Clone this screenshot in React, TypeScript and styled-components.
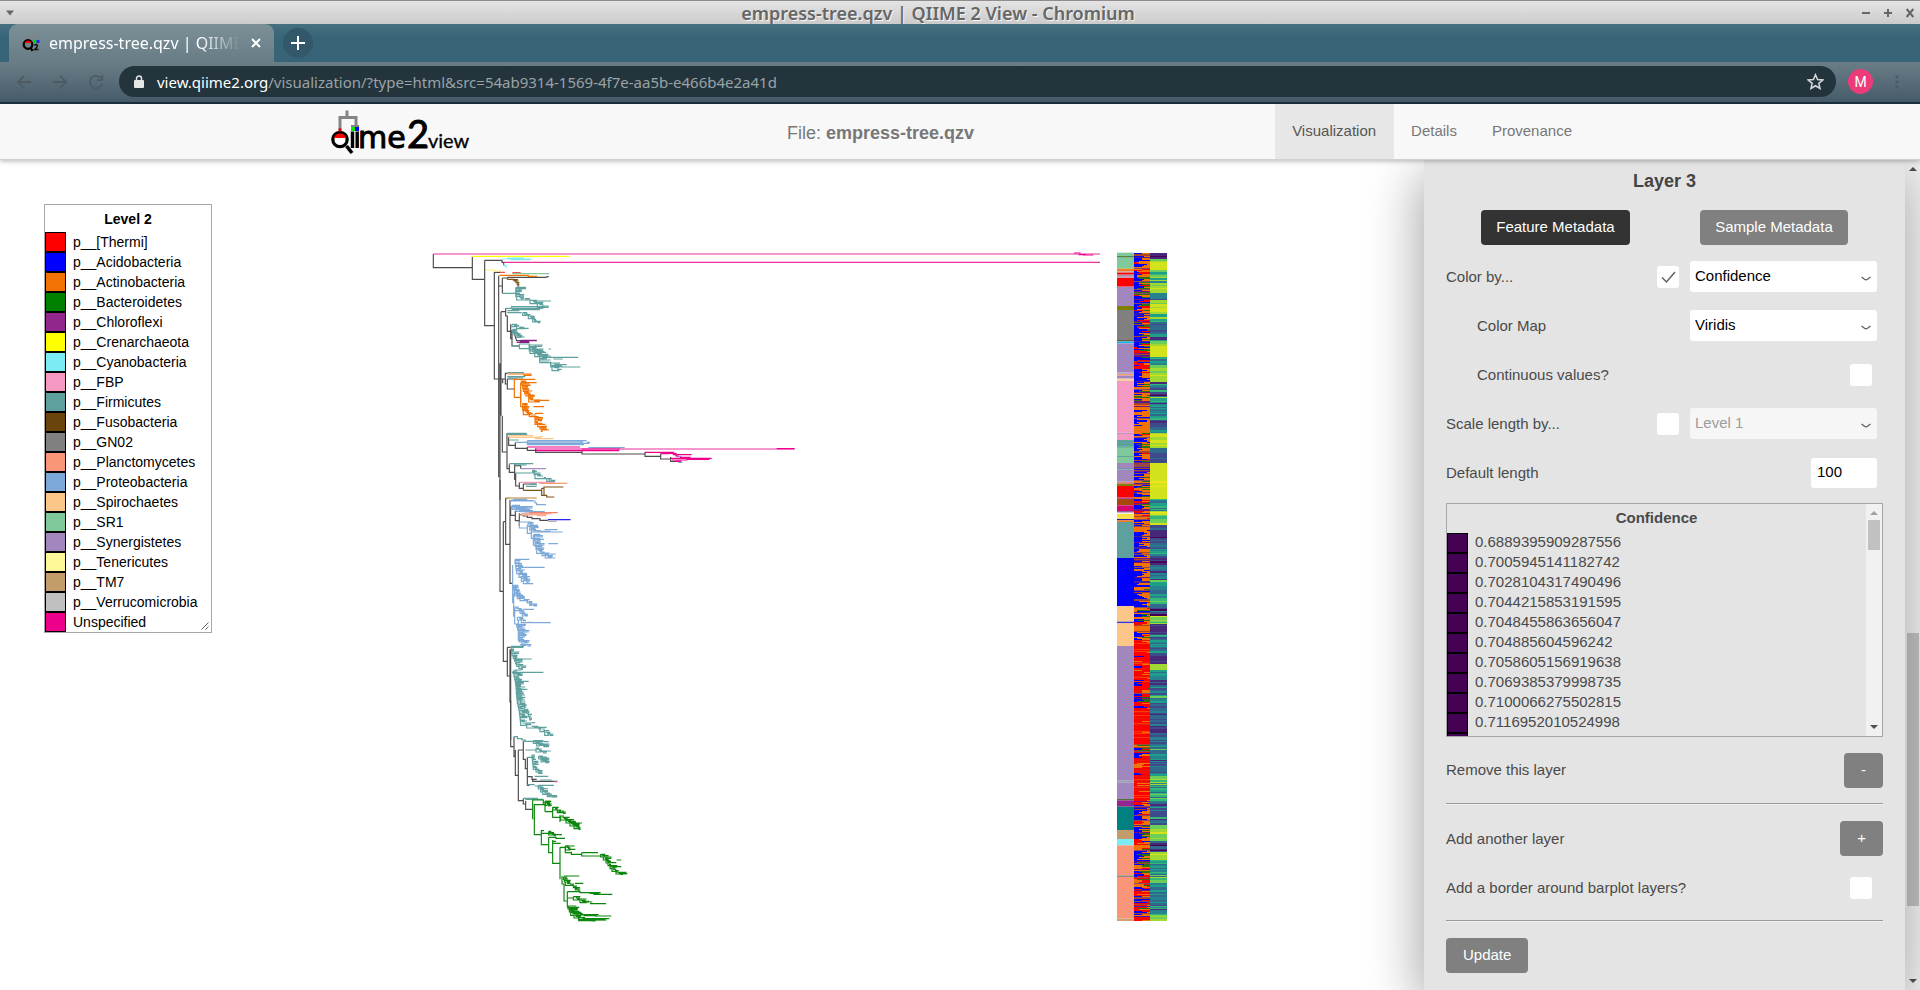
import React from "react";
import styled, { createGlobalStyle } from "styled-components";

const GlobalStyle = createGlobalStyle`
  *, *::before, *::after { box-sizing: border-box; }
  body { margin: 0; background: #fff; font-family: "Liberation Sans", Arial, sans-serif; }
  button, input, select { font: inherit; }
`;

const CHROME_FONT = `"Noto Sans", "Open Sans", sans-serif`;

/* ---------- window chrome ---------- */

const Page = styled.div`
  display: flex;
  flex-direction: column;
  height: 100vh;
  overflow: hidden;
`;

const TitleBar = styled.header`
  display: grid;
  grid-template-columns: auto 1fr auto;
  align-items: center;
  flex: none;
  height: 24px;
  padding: 0 4px;
  border-top: 1px solid #8f8d8f;
  background: linear-gradient(#e4e4e4, #cbcbcb);
  color: #666;
  font-family: ${CHROME_FONT};
`;

const WindowTitle = styled.h1`
  margin: 0;
  text-align: center;
  font-size: 18px;
  line-height: 22px;
  font-weight: 600;
  color: #666;
  text-shadow: 1px 1px 0 #f4f4f4;
`;

const WindowButtons = styled.div`
  display: flex;
  gap: 10px;
`;

const PlainButton = styled.button`
  display: flex;
  align-items: center;
  justify-content: center;
  padding: 0;
  border: 0;
  background: none;
  color: inherit;
`;

const TabStrip = styled.div`
  display: flex;
  flex: none;
  height: 38px;
  padding-left: 9px;
  background: linear-gradient(#44707f, #386478 14px, #386478);
`;

const BrowserTab = styled.div`
  display: flex;
  align-items: center;
  width: 265px;
  padding: 0 12px 0 13px;
  border-radius: 9px 9px 0 0;
  background: linear-gradient(#7b9096, #687c86);
  color: #fff;
  font-family: ${CHROME_FONT};
`;

const TabTitle = styled.span`
  flex: 1;
  margin-left: 9px;
  overflow: hidden;
  white-space: nowrap;
  font-size: 16px;
  line-height: 24px;
  mask-image: linear-gradient(90deg, #000 150px, transparent 192px);
`;

const NewTab = styled(PlainButton)`
  width: 30px;
  height: 30px;
  margin: 4px 0 0 9px;
  border-radius: 50%;
  background: #33586a;
  color: #fff;
`;

const Toolbar = styled.div`
  display: flex;
  align-items: center;
  flex: none;
  height: 42px;
  padding: 0 21px 1px 16px;
  border-bottom: 2px solid #1b3342;
  background: linear-gradient(#6a7e88, #465b69);
  color: #4f5b63;
`;

const NavButtons = styled.div`
  display: flex;
  gap: 20px;
  width: 103px;
`;

const AddressBar = styled.div`
  display: flex;
  align-items: center;
  flex: 1;
  height: 31px;
  padding: 0 12px 0 14px;
  border-radius: 16px;
  background: #24343c;
  color: #d4d8da;
`;

const Url = styled.span`
  flex: 1;
  margin-left: 12px;
  font-family: ${CHROME_FONT};
  font-size: 15px;
  line-height: 24px;
  color: #99a3a7;
  b { font-weight: 400; color: #fff; }
`;

const Avatar = styled.button`
  width: 25px;
  height: 25px;
  margin: 0 22px 0 12px;
  padding: 0;
  border: 0;
  border-radius: 50%;
  background: #ec3b79;
  color: #fff;
  font-family: Roboto, sans-serif;
  font-size: 14px;
`;

/* ---------- site header ---------- */

const SiteHeader = styled.div`
  position: relative;
  z-index: 2;
  flex: none;
  height: 56px;
  border-bottom: 1px solid #d0d0d0;
  background: #f8f8f8;
  box-shadow: 0 1px 5px rgba(0, 0, 0, 0.3);
`;

const HeaderInner = styled.div`
  display: flex;
  max-width: 1260px;
  height: 55px;
  margin: 0 auto;
`;

const FileName = styled.p`
  flex: 1;
  margin: 0;
  padding: 2px 0 0 16px;
  text-align: center;
  font-size: 18px;
  line-height: 55px;
  color: #777;
`;

const SiteNav = styled.nav`
  display: flex;
`;

const NavLink = styled.a<{ $active?: boolean }>`
  padding: 0 18px 0 17px;
  background: ${(p) => (p.$active ? "#e7e7e7" : "transparent")};
  color: ${(p) => (p.$active ? "#555" : "#777")};
  font-size: 15px;
  line-height: 54px;
  text-decoration: none;
`;

/* ---------- workspace ---------- */

const Workspace = styled.main`
  display: flex;
  flex: 1;
  min-height: 0;
`;

const Stage = styled.section`
  position: relative;
  flex: 1;
  min-width: 0;
  overflow: hidden;
`;

const TreeCanvas = styled.svg`
  display: block;
  width: 100%;
  height: 100%;
`;

const FloatingLegend = styled.div`
  position: absolute;
  top: 44px;
  left: 44px;
  width: 168px;
  border: 1px solid #a6a6a6;
  background: #fff;
  color: #000;
  font-size: 14px;
  line-height: 20px;
`;

const LegendTitle = styled.div<{ $height: number; $line: number }>`
  height: ${(p) => p.$height}px;
  line-height: ${(p) => p.$line}px;
  text-align: center;
  font-weight: 700;
`;

const LegendRow = styled.div`
  display: flex;
  gap: 7px;
  height: 20px;
  white-space: nowrap;
`;

const Swatch = styled.span<{ $color: string }>`
  flex: none;
  width: 21px;
  height: 20px;
  border: 1px solid #000;
  background: ${(p) => p.$color};
`;

const ResizeGrip = styled.svg`
  position: absolute;
  right: 2px;
  bottom: 2px;
`;

/* ---------- side panel ---------- */

const Panel = styled.aside`
  position: relative;
  z-index: 1;
  flex: none;
  width: 481px;
  padding: 11px 22px 0;
  background: #e4e4e4;
  color: #4a4a4a;
  font-size: 15px;
  box-shadow: -4px 14px 50px rgba(0, 0, 0, 0.36);
`;

const PanelTitle = styled.h2`
  margin: 0 0 19px;
  text-align: center;
  font-size: 18px;
  line-height: 20px;
  color: #444;
`;

const ButtonPair = styled.div`
  display: flex;
  justify-content: space-around;
  margin-bottom: 16px;
  --button-pad: 15px;
`;

const Button = styled.button<{ $dark?: boolean }>`
  height: 35px;
  padding: 0 var(--button-pad, 17px) 2px;
  border: 0;
  border-radius: 4px;
  background: ${(p) => (p.$dark ? "#333" : "#808080")};
  color: #fff;
`;

const Fields = styled.div`
  display: grid;
  gap: 18px;
  margin-bottom: 15px;
`;

const Row = styled.div<{ $indent?: boolean; $inset?: number; $height?: number }>`
  display: flex;
  align-items: center;
  gap: 11px;
  height: ${(p) => p.$height ?? 31}px;
  padding: 0 ${(p) => p.$inset ?? 6}px 0 ${(p) => (p.$indent ? 31 : 0)}px;
  > :first-child { flex: 1; padding-bottom: 1px; }
`;

const SelectWrap = styled.span`
  position: relative;
  display: flex;
  width: 187px;
  svg { position: absolute; right: 6px; top: 15px; pointer-events: none; }
`;

const Select = styled.select`
  width: 100%;
  height: 31px;
  padding: 0 20px 2px 5px;
  border: 0;
  border-radius: 3px;
  appearance: none;
  background: #fff;
  color: #000;
  &:disabled { background: #f6f6f6; color: #9c9c9c; opacity: 1; }
`;

const CheckWrap = styled.span`
  position: relative;
  display: flex;
  svg { position: absolute; left: 4px; top: 5px; pointer-events: none; }
`;

const CheckInput = styled.input`
  width: 22px;
  height: 22px;
  margin: 0;
  border-radius: 3px;
  appearance: none;
  background: #fff;
  & + svg { visibility: hidden; }
  &:checked + svg { visibility: visible; }
`;

const NumberInput = styled.input`
  width: 66px;
  height: 30px;
  padding: 0 6px 2px;
  border: 0;
  border-radius: 3px;
  background: #fff;
  color: #000;
`;

const ValueBox = styled.div`
  display: flex;
  height: 234px;
  margin-bottom: 15px;
  border: 1px solid #a6a6a6;
  line-height: 18px;
`;

const ValueList = styled.div`
  flex: 1;
  overflow: hidden;
`;

const Track = styled.div<{ $width: number; $above: number }>`
  display: grid;
  grid-template-rows: ${(p) => p.$above}px auto 1fr;
  justify-items: center;
  flex: none;
  width: ${(p) => p.$width}px;
  background: #f1f1f1;
`;

const Thumb = styled.div<{ $height: number }>`
  width: 12px;
  height: ${(p) => p.$height}px;
  background: #c1c1c1;
`;

const Arrow = styled.i<{ $down?: boolean; $muted?: boolean }>`
  align-self: ${(p) => (p.$down ? "end" : "start")};
  margin: ${(p) => (p.$down ? "0 0 7px" : "7px 0 0")};
  border: 4px solid transparent;
  border-${(p) => (p.$down ? "top" : "bottom")}-color: ${(p) => (p.$muted ? "#a3a3a3" : "#505050")};
  border-${(p) => (p.$down ? "bottom" : "top")}-width: 0;
`;

const Divider = styled.hr`
  height: 2px;
  margin: 15px 0 16px;
  border: 0;
  border-top: 1px solid #9a9a9a;
  background: #eee;
`;

/* ---------- data ---------- */

const PHYLA: [string, string][] = [
  ["p__[Thermi]", "#ff0000"],
  ["p__Acidobacteria", "#0000ff"],
  ["p__Actinobacteria", "#f27304"],
  ["p__Bacteroidetes", "#008000"],
  ["p__Chloroflexi", "#91278d"],
  ["p__Crenarchaeota", "#ffff00"],
  ["p__Cyanobacteria", "#7cecf4"],
  ["p__FBP", "#f49ac2"],
  ["p__Firmicutes", "#5da09e"],
  ["p__Fusobacteria", "#6b440b"],
  ["p__GN02", "#808080"],
  ["p__Planctomycetes", "#f99679"],
  ["p__Proteobacteria", "#7da9d8"],
  ["p__Spirochaetes", "#fcc688"],
  ["p__SR1", "#80c99b"],
  ["p__Synergistetes", "#a287bf"],
  ["p__Tenericutes", "#fff899"],
  ["p__TM7", "#c49c6b"],
  ["p__Verrucomicrobia", "#c0c0c0"],
  ["Unspecified", "#ee008c"],
];

const VALUES = [
  "0.6889395909287556", "0.7005945141182742", "0.7028104317490496", "0.7044215853191595",
  "0.7048455863656047", "0.704885604596242", "0.7058605156919638", "0.7069385379998735",
  "0.7100066275502815", "0.7116952010524998", "",
];

/* ---------- tree drawing ---------- */

function makeRandom(seed: number) {
  let s = seed;
  return () => {
    s = (s * 1664525 + 1013904223) % 4294967296;
    return s / 4294967296;
  };
}

type Pt = [number, number];
const TEAL = "#5da09e";
const ORANGE = "#f27304";
const BLUE = "#7da9d8";
const GREEN = "#0c860c";
const BROWN = "#7a5518";
const PINK = "#ee008c";
const DARK = "#4c4c4c";

/* A clade: a stepped spine through the knots, with short tips to its right. */
function clade(knots: Pt[], tips: number, min: number, max: number, seed: number) {
  const rnd = makeRandom(seed);
  let d = `M${knots[0][0]} ${knots[0][1]}`;
  let px = knots[0][0];
  for (let k = 1; k < knots.length; k++) {
    const [ax, ay] = knots[k - 1];
    const [bx, by] = knots[k];
    const steps = Math.max(1, Math.round(Math.abs(by - ay) / 9));
    for (let i = 1; i <= steps; i++) {
      const x = Math.round(ax + ((bx - ax) * i) / steps);
      const y = Math.round(ay + ((by - ay) * i) / steps);
      d += `V${y}H${x}`;
      px = x;
    }
  }
  const top = knots[0][1];
  const bottom = knots[knots.length - 1][1];
  for (let i = 0; i < tips; i++) {
    const y = Math.round(top + ((bottom - top) * (i + rnd() * 0.6)) / tips);
    let x = px;
    for (let k = 1; k < knots.length; k++) {
      const [ax, ay] = knots[k - 1];
      const [bx, by] = knots[k];
      if (y >= ay && y <= by) {
        x = ax + ((bx - ax) * (y - ay)) / Math.max(1, by - ay);
        break;
      }
    }
    x = Math.round(x);
    const len = Math.round(min + (max - min) * rnd());
    const fork = Math.round(len * 0.45);
    d += `M${x} ${y}h${len}`;
    if (rnd() > 0.45) d += `M${x + fork} ${y}v4h${Math.round(len * 0.5)}`;
  }
  return d;
}

type Stroke = [string, string];

/* Upper part of the tree, three units to a pixel from (420, 240). */
const UPPER: Stroke[] = [
  [DARK, "M40 42V83H157M157 50V118H194M194 61V257H223M194 61H246V67H251V76M223 96V417H248M223 97H243M236 107V712M236 138H247M247 114V160M247 114H262V118M262 112H376l10 -3M243 215V527M240 370V780M243 215H257M257 205V228H262V274H272M272 253V296H276M276 270V318H298M280 272L290 302H350M248 417V430M240 417H256V400H262M256 417V432H262M262 417V447H283M262 417H290M247 527V636H261M261 580V686H268M268 673V697H284M284 673V718H287M284 677H302V686M266 590V616H286M286 607V625H322M322 621V631H347M347 625V637H486M486 632V642H675M675 636V649H722M722 641V657H752M752 651V664H775M287 700V738H298M298 727V745H310M310 732V751M310 732H350M257 775V780"],
  ["#ffff00", "M157 49H447"],
  ["#fff27a", "M198 90H222V93H243"],
  ["#7cecf4", "M246 57H336M262 54H312M272 59H330M253 72V77H258V83"],
  ["#f2504e", "M240 97H255M277 98H302"],
  ["#80c99b", "M277 101H388"],
  [ORANGE, "M238 106H325V109H352"],
  [BROWN, "M262 118H282V122H288V128H294V138H298M276 119h18M282 123h14M286 128h12M290 133h8M310 751H365M365 745V766H380V771H403M365 745H372V741H430M372 745V766"],
  [TEAL, "M247 160H288M288 142V172M288 142h30M300 146h18M257 205H275V200H372M275 205H370M275 209H360M262 212H298M262 218H305M276 318H298V326H328M298 312V326M298 312H330M386 327H393M328 312V333H345M385 352H475M400 357H428M392 365V380H410M405 374H440M425 381H481M261 580H320M262 583H322M268 600H296M268 671H340M284 675H320M287 699H338M318 739H350M262 398H312M262 410H316M262 414H310M352 183H393M330 733h20"],
  [TEAL, clade([[288, 145], [290, 170], [330, 180], [374, 202]], 13, 8, 28, 3)],
  [TEAL, clade([[308, 218], [325, 226], [350, 246]], 10, 6, 18, 4)],
  [TEAL, clade([[276, 253], [290, 260], [318, 266]], 6, 8, 18, 5)],
  [TEAL, clade([[278, 268], [282, 278], [300, 292]], 11, 5, 16, 6)],
  [TEAL, clade([[328, 314], [330, 330], [358, 350]], 10, 20, 42, 7)],
  [TEAL, clade([[358, 336], [360, 366], [392, 368], [396, 380], [418, 392]], 12, 10, 34, 8)],
  [TEAL, clade([[338, 690], [345, 704], [380, 716], [402, 724]], 8, 6, 20, 9)],
  ["#8a1c88", "M302 301H350M290 307H328M300 304H328"],
  [ORANGE, "M262 402H333V406H310M283 418H346M283 418V472H302M302 428V490M302 428H350M302 423H318"],
  [ORANGE, clade([[305, 424], [310, 446], [318, 462], [326, 468], [326, 478], [358, 486]], 16, 8, 28, 11)],
  [ORANGE, "M302 450V500H308V512M345 481H388M340 500H372M345 520H370"],
  [ORANGE, clade([[308, 490], [310, 512], [328, 524], [345, 530], [345, 545], [360, 560], [368, 574]], 20, 8, 26, 12)],
  ["#fcc688", "M266 587H340M266 592H360V590H368M345 596H400"],
  [BLUE, "M286 607H322M322 602V614M322 602H500M322 606H490M322 610H508M322 614H492M484 604V612M500 607H510M505 623H614M770 650h15M775 667h12"],
  ["#ee2f9f", "M40 42H2040M251 67H2040M486 627H1124"],
  [PINK, "M1962 39h20M1976 44h22M1988 45h32M322 621H480M347 627H600M347 632H598M675 637H760V644H815M740 640H768V648H776M722 641H750M752 655H875M780 652H812M756 660H802M800 658H868M768 664H784M1070 626H1124"],
  ["#a287bf", "M302 686H378"],
  ["#f49ac2", "M298 727H404"],
  ["#f99660", "M358 730H442"],
  ["#d9b27c", "M257 774H350"],
];

/* Middle part, three units to a pixel from (420, 480). */
const MIDDLE: Stroke[] = [
  [DARK, "M240 0V334H250M250 125V544H262M250 125H257M257 55V193H270M257 55H270M270 60V310H278M272 80V106H286M286 92V122H298M298 100V138M298 104H310V108H322V112H336V116H360V121H384M262 502V588H270M270 508V668M262 502H272M272 508V780"],
  ["#d9b27c", "M257 54H350"],
  [BLUE, "M272 60H320V57H280M272 63H345V69H350V74H378M318 62H340M272 80H338M272 84H338M300 95H374M298 126V144H322M298 126H335M322 135V160H334M334 130V175H340M340 165V196M340 196H350V208M374 149H412M374 156H428M385 191H414M390 222H408M385 234H406M278 255V370M281 340V410M284 380V432H295M295 420V482M295 482H310M284 238H328M295 262H374M302 290H330M340 311H334M310 388H342M325 428H392M300 494H322"],
  [BLUE, clade([[276, 76], [290, 88], [300, 94]], 6, 20, 44, 21)],
  [BLUE, clade([[324, 128], [334, 150], [374, 156]], 9, 12, 30, 22)],
  [BLUE, clade([[342, 162], [346, 190], [350, 208], [366, 220], [385, 234]], 18, 12, 32, 23)],
  [BLUE, clade([[285, 240], [290, 270], [304, 292], [310, 304], [336, 311]], 15, 8, 26, 24)],
  [BLUE, clade([[280, 316], [284, 340], [300, 356], [322, 362], [336, 376]], 20, 6, 22, 25)],
  [BLUE, clade([[284, 380], [300, 392], [314, 408]], 7, 6, 16, 26)],
  [BLUE, clade([[292, 412], [304, 420], [325, 428]], 5, 8, 20, 27)],
  [BLUE, clade([[290, 432], [296, 450], [298, 476], [306, 486], [318, 496]], 17, 8, 32, 28)],
  ["#fbab95", "M304 101H395M304 104H380M298 105H340M350 107H378"],
  ["#f27a60", "M328 98H413"],
  ["#1414e0", "M384 119H452"],
  ["#aaa", "M384 124H410"],
  [TEAL, "M272 499H312M272 502H310M290 537H335M276 577H370M282 570H304M300 604H326M300 628H322M334 728H345M360 742H380"],
  [TEAL, clade([[274, 502], [276, 520], [284, 536], [290, 552], [304, 566]], 15, 6, 24, 31)],
  [TEAL, clade([[280, 572], [286, 600], [292, 660], [298, 690], [302, 726], [320, 736], [360, 744], [388, 766]], 40, 8, 28, 32)],
  [TEAL, clade([[290, 590], [294, 650], [320, 690], [334, 720]], 20, 4, 14, 33)],
];

/* Lower part, three units to a pixel from (480, 700). */
const LOWER: Stroke[] = [
  [DARK, "M92 0V140H102M102 110V170H106M106 150V226H115M115 150V302H130M115 150H130M130 124V178H136V206H142M142 172V256H148M142 230H156V238H170M158 236V244H232M130 295V312H137M137 302V328H158"],
  [TEAL, "M102 110H112V116H126V120H138M130 124H180M136 150H168M190 125H206M180 132H208M180 153H212M142 172H158M142 254H164M175 256H222M164 229H205M180 240H215M130 295H174M136 298H190M164 258H175V264M215 290H232"],
  [TEAL, clade([[160, 122], [180, 138]], 6, 12, 30, 41)],
  [TEAL, clade([[168, 144], [184, 156]], 4, 8, 20, 42)],
  [TEAL, clade([[156, 164], [160, 200], [176, 216], [188, 220]], 12, 6, 20, 43)],
  [TEAL, clade([[176, 168], [190, 186]], 7, 8, 28, 44)],
  [TEAL, clade([[175, 258], [188, 276], [215, 290]], 10, 6, 24, 45)],
  [GREEN, "M158 298V358M158 300H190V312M163 312V404H184M163 314H195M195 304V335M195 304H214M195 335H218M218 322V352H240M240 345V366M282 369H306M184 390V434H206M184 392H192M184 400H215M228 404H246M206 412V458H218M206 412H228V415H255M218 420V490H240M218 424H228M218 430H242M240 442V538M240 442H256V458H274M256 438H284M274 455V463H305M305 458V468H365M305 458H354M246 528V552H252V603H262M252 528H298M285 550H310M262 575V620M262 575H300V578H338M340 583H397M262 594H280M262 622H298M310 604H328M330 611H378M345 648H394M340 660H380M410 480H424M405 500H424M420 521H442M282 560L300 574"],
  [GREEN, clade([[196, 304], [202, 316]], 5, 6, 16, 51)],
  [GREEN, clade([[218, 322], [232, 330], [250, 338]], 5, 8, 18, 52)],
  [GREEN, clade([[242, 348], [258, 360], [282, 378], [296, 386]], 12, 8, 28, 53)],
  [GREEN, clade([[206, 394], [222, 405]], 4, 6, 16, 54)],
  [GREEN, clade([[256, 438], [272, 450]], 4, 8, 20, 55)],
  [GREEN, clade([[362, 462], [378, 480], [396, 506], [420, 522]], 16, 6, 26, 56)],
  [GREEN, clade([[250, 530], [256, 546], [280, 556], [292, 570]], 9, 6, 20, 57)],
  [GREEN, clade([[280, 590], [300, 600], [320, 608]], 6, 10, 30, 58)],
  [GREEN, clade([[264, 618], [272, 636], [282, 646], [296, 654], [345, 662]], 14, 12, 32, 59)],
  [GREEN, "M296 652V658H320M300 644H356M310 647H350M315 656H388M318 659H375M325 578H362M330 580H358M342 656H386"],
  ["#f49ac2", "M222 246H232"],
];

const TREE_PARTS: { x: number; y: number; strokes: Stroke[] }[] = [
  { x: 420, y: 480, strokes: MIDDLE },
  { x: 480, y: 700, strokes: LOWER },
  { x: 420, y: 240, strokes: UPPER },
];

/* ---------- barplot layers (three units to a pixel, from y = 240) ---------- */

const LAYER_ONE: [number, string][] = [
  [38, "#80c99b"], [48, "#4f8548"], [53, "#80c99b"], [86, "#ee8020"], [94, "#c79a9c"], [98, "#ff0000"],
  [104, "#a98fae"], [108, "#c49fb4"], [114, "#ff0000"], [140, "#a287bf"], [198, "#808000"], [210, "#808080"],
  [300, "#7d5334"], [304, "#0fb4ee"], [310, "#a287bf"], [398, "#b9aac9"], [402, "#f49a72"], [407, "#a287bf"],
  [416, "#fbd0a0"], [423, "#f49ac2"], [578, "#c98fc0"], [582, "#f49ac2"], [600, "#5da09e"], [618, "#6eb39c"],
  [624, "#80c99b"], [648, "#62a59d"], [651, "#80c99b"], [669, "#a287bf"], [684, "#6d96a8"], [689, "#a287bf"],
  [725, "#d08879"], [732, "#808000"], [738, "#ff0000"], [773, "#a44fa0"], [777, "#a8470a"], [796, "#d4076e"],
  [813, "#8c649c"], [818, "#f5efe0"], [822, "#f9e04a"], [837, "#1c1cc0"], [841, "#ef7a1c"], [846, "#5da09e"],
  [954, "#0000ff"], [1098, "#fcc688"], [1145, "#3a34d0"], [1150, "#fcc688"], [1218, "#a287bf"],
  [1622, "#96a0b4"], [1628, "#a287bf"], [1677, "#4f7038"], [1681, "#91278d"], [1700, "#008080"],
  [1770, "#c49c6b"], [1797, "#7cecf4"], [1816, "#f99679"], [1906, "#94897a"], [1911, "#f99679"],
  [2035, "#d3a274"], [2043, ""],
];

/* Share of orange, blue, red and green along the sample layer. */
const SAMPLE_MIX: [number, number, number, number, number][] = [
  [38, 6, 5, 1, 1], [110, 3, 6, 1, 4], [200, 4, 7, 2, 2], [300, 3, 6, 3, 1], [390, 5, 6, 1, 1],
  [425, 10, 2, 0, 2], [500, 10, 5, 0, 0], [570, 5, 6, 1, 1], [730, 3, 6, 3, 3], [800, 5, 4, 2, 1],
  [850, 8, 5, 0, 0], [960, 7, 8, 0, 1], [1060, 4, 7, 2, 3], [1140, 7, 4, 2, 1], [1200, 1, 1, 10, 0],
  [1340, 1, 3, 5, 4], [1400, 1, 0, 14, 0], [1510, 2, 4, 4, 2], [1550, 1, 1, 12, 0], [1678, 4, 4, 1, 0],
  [1720, 4, 8, 1, 2], [1820, 4, 6, 1, 5], [1900, 3, 4, 6, 1], [1960, 3, 6, 5, 2], [2020, 3, 1, 8, 1],
];
const SAMPLE_COLORS = ["#f27304", "#0000ff", "#ff0000", "#2b7410"];
const BLENDS = ["#8a4a60", "#4a1f9c", "#a8442c", "#7a0f80"];

/* Position on the viridis scale along the confidence layer, with its spread. */
const CONFIDENCE: [number, number, number][] = [
  [38, 0.1, 0.1], [54, 0.75, 0.15], [68, 0.9, 0.06], [90, 0.7, 0.3], [124, 0.85, 0.15], [156, 0.35, 0.15],
  [178, 0.85, 0.14], [220, 0.5, 0.45], [250, 0.25, 0.3], [300, 0.6, 0.3], [318, 0.9, 0.08], [350, 0.45, 0.2],
  [375, 0.8, 0.12], [422, 0.4, 0.4], [490, 0.45, 0.2], [540, 0.3, 0.3], [578, 0.85, 0.14], [622, 0.24, 0.06],
  [669, 0.92, 0.06], [772, 0.45, 0.3], [812, 0.75, 0.3], [852, 0.25, 0.1], [870, 0.05, 0.06], [892, 0.35, 0.35],
  [960, 0.25, 0.3], [1020, 0.5, 0.35], [1100, 0.2, 0.3], [1124, 0.8, 0.2], [1150, 0.08, 0.14],
  [1180, 0.4, 0.35], [1234, 0.12, 0.14], [1270, 0.8, 0.12], [1290, 0.45, 0.2], [1320, 0.35, 0.35],
  [1400, 0.25, 0.25], [1500, 0.4, 0.35], [1600, 0.6, 0.4], [1680, 0.35, 0.4], [1755, 0.75, 0.15],
  [1800, 0.2, 0.3], [1836, 0.83, 0.06], [1858, 0.5, 0.25], [1900, 0.6, 0.35], [1930, 0.4, 0.35],
  [2020, 0.75, 0.2],
];
const VIRIDIS = ["#440154", "#482878", "#3e4a89", "#31688e", "#26828e", "#1f9e89", "#35b779", "#6dcd59", "#a2d832", "#d2e21b", "#ece51b"];

function at<T extends [number, ...unknown[]]>(list: T[], v: number): T {
  let found = list[0];
  for (const item of list) if (item[0] <= v) found = item;
  return found;
}

type Bar = { x: number; y: number; w: number; h: number; c: string };

function sampleBars(): Bar[] {
  const rnd = makeRandom(77);
  const pick = (mix: number[]) => {
    let n = rnd() * mix.reduce((a, b) => a + b, 0);
    for (let i = 0; i < mix.length; i++) {
      n -= mix[i];
      if (n <= 0) return i;
    }
    return 0;
  };
  const bars: Bar[] = [];
  let left = 1;
  for (let y = 253; y < 921; y++) {
    const [, o, b, r, g] = at(SAMPLE_MIX, (y - 240) * 3);
    if (rnd() > 0.6) left = pick([o * 0.5, b * 1.3, r, g * 0.3]);
    const right = pick([o * 1.8, b * 0.2, r, g]);
    const solid = rnd() < 0.22;
    const blend = r > 8 ? ["#e8180a", "#ff3a00"][y % 2] : BLENDS[Math.floor(rnd() * 4)];
    const split = [3, 5, 8, 8, 8, 10, 13][Math.floor(rnd() * 7)];
    bars.push({ x: 1134, y, w: 16, h: 1, c: solid ? blend : SAMPLE_COLORS[right] });
    if (!solid) bars.push({ x: 1134, y, w: split, h: 1, c: SAMPLE_COLORS[left] });
  }
  return bars;
}

function confidenceBars(): Bar[] {
  const rnd = makeRandom(1234);
  const bars: Bar[] = [];
  let y = 253;
  while (y < 921) {
    const [, mean, spread] = at(CONFIDENCE, (y - 240) * 3);
    const t = Math.min(1, Math.max(0, mean + (rnd() + rnd() - 1) * spread));
    const h = Math.min(921 - y, rnd() > 0.6 ? 2 : 1);
    bars.push({ x: 1150, y, w: 17, h, c: VIRIDIS[Math.round(t * 10)] });
    y += h;
  }
  return bars;
}

const FEATURE_BARS: Bar[] = LAYER_ONE.slice(0, -1).map(([v, c], i) => ({
  x: 1117,
  y: 240 + v / 3,
  w: 17,
  h: (LAYER_ONE[i + 1][0] - v) / 3,
  c,
}));

const BARS = [...FEATURE_BARS, ...sampleBars(), ...confidenceBars()];

function Tree() {
  return (
    <TreeCanvas viewBox="0 160 1424 830" preserveAspectRatio="xMidYMin meet" role="img" aria-label="Phylogenetic tree with barplots">
      {TREE_PARTS.map((part, i) => (
        <g key={i} transform={`translate(${part.x} ${part.y}) scale(0.33333)`} fill="none" strokeWidth="3.500">
          {part.strokes.map(([color, d], j) => (
            <path key={j} d={d} stroke={color} />
          ))}
        </g>
      ))}
      {BARS.map((b, i) => (
        <rect key={i} x={b.x} y={b.y} width={b.w} height={b.h} fill={b.c} />
      ))}
    </TreeCanvas>
  );
}

/* ---------- small drawings ---------- */

const Favicon = () => (
  <svg width="18" height="18" viewBox="0 0 18 18" fill="none">
    <path d="M6 6V2.500H14V6M10 2.500V0" stroke="#857f7d" strokeWidth="1.200" />
    <circle cx="6" cy="10.500" r="4.300" stroke="#000" strokeWidth="2.200" />
    <path d="M2.500 9A3.700 3.700 0 0 1 9.500 9Z" fill="#f00" />
    <path d="M8.500 13.500L10.500 17" stroke="#000" strokeWidth="2" />
    <path d="M11.500 6h3v3h-3z" fill="#0d0" />
    <path d="M14.500 6h3v3h-3z" fill="#22f" />
    <path d="M12.500 11.500q1.500-2 3 0q0 1.500-3 4h4" stroke="#111" strokeWidth="1.400" />
  </svg>
);

const Logo = () => (
  <svg width="140" height="55" viewBox="330 104 140 55" fill="none" role="img" aria-label="qiime2 view">
    <path d="M347 110.500V117M340 130V117.500H356V125M351 126.500H359" stroke="#858585" strokeWidth="3" />
    <circle cx="340" cy="139.500" r="7.200" fill="#fff" stroke="#000" strokeWidth="3.200" />
    <path d="M334 138A6.300 6.300 0 0 1 346 138Z" fill="#f00" />
    <path d="M338.500 128.500h3v3h-3z" fill="#d00" />
    <path d="M346.500 146L352 153" stroke="#000" strokeWidth="3.600" />
    <path d="M351 127h4v4h-4z" fill="#0e0" />
    <path d="M355 127h4v4h-4z" fill="#00f" />
    <path d="M352.500 131.500V148M357.200 131.500V148" stroke="#000" strokeWidth="3.400" />
    <text x="358" y="148" fontFamily="DejaVu Sans, sans-serif" fontSize="30" fill="#000" stroke="#000" strokeWidth="1">me</text>
    <text x="407" y="148" fontFamily="Lato, sans-serif" fontSize="38" fill="#000" stroke="#000" strokeWidth="1">2</text>
    <text x="428" y="148" fontFamily="Lato, sans-serif" fontSize="20" fill="#000" stroke="#000" strokeWidth="0.300">view</text>
  </svg>
);

const Glyph = ({ d, size = 18, width = 2 }: { d: string; size?: number; width?: number }) => (
  <svg width={size} height={size} viewBox="0 0 18 18" fill="none" stroke="currentColor" strokeWidth={width}>
    <path d={d} />
  </svg>
);

/* ---------- form parts ---------- */

function Check({ id, checked }: { id: string; checked?: boolean }) {
  return (
    <CheckWrap>
      <CheckInput type="checkbox" id={id} defaultChecked={checked} />
      <svg width="15" height="13" viewBox="0 0 15 13" fill="none" stroke="#606060" strokeWidth="1.500">
        <path d="M1 6.500L5.500 11L14 1" />
      </svg>
    </CheckWrap>
  );
}

function Dropdown({ id, label, value, disabled }: { id: string; label?: string; value: string; disabled?: boolean }) {
  return (
    <SelectWrap>
      <Select id={id} aria-label={label} disabled={disabled} defaultValue={value}>
        <option>{value}</option>
      </Select>
      <svg width="10" height="6" viewBox="0 0 10 6" fill="none" stroke="#606060" strokeWidth="1.300">
        <path d="M0.500 1L3.500 3.300Q5 4.300 6.500 3.300L9.500 1" />
      </svg>
    </SelectWrap>
  );
}

export default function App() {
  return (
    <Page>
      <GlobalStyle />
      <TitleBar>
        <WindowButtons>
          <PlainButton aria-label="Window menu">
            <svg width="12" height="8" viewBox="0 0 12 8"><path d="M2 1.500h8L6 6.500z" fill="#666" /></svg>
          </PlainButton>
        </WindowButtons>
        <WindowTitle>empress-tree.qzv | QIIME 2 View - Chromium</WindowTitle>
        <WindowButtons>
          <PlainButton aria-label="Minimize"><Glyph size={12} width={3} d="M3 9H15" /></PlainButton>
          <PlainButton aria-label="Maximize"><Glyph size={12} width={3} d="M3 9H15M9 3V15" /></PlainButton>
          <PlainButton aria-label="Close"><Glyph size={12} width={3} d="M4 3L14 15M14 3L4 15" /></PlainButton>
        </WindowButtons>
      </TitleBar>
      <TabStrip>
        <BrowserTab>
          <Favicon />
          <TabTitle>empress-tree.qzv | QIIME 2 View</TabTitle>
          <PlainButton aria-label="Close tab"><Glyph size={12} width={3} d="M3 3L15 15M15 3L3 15" /></PlainButton>
        </BrowserTab>
        <NewTab aria-label="New tab"><Glyph size={18} d="M9 2V16M2 9H16" /></NewTab>
      </TabStrip>
      <Toolbar>
        <NavButtons>
          <PlainButton aria-label="Back"><Glyph size={16} d="M17 9H2M9 2L2 9L9 16" /></PlainButton>
          <PlainButton aria-label="Forward"><Glyph size={16} d="M1 9H16M9 2L16 9L9 16" /></PlainButton>
          <PlainButton aria-label="Reload"><Glyph size={16} d="M14.500 4.500A7 7 0 1 0 16 10.500M16 1V7H10" /></PlainButton>
        </NavButtons>
        <AddressBar>
          <svg width="12" height="14" viewBox="0 0 12 14" fill="none">
            <rect x="1" y="5" width="10" height="8" rx="1" fill="#e6e8e8" />
            <path d="M3.500 5.500V3.500a2.500 2.500 0 0 1 5 0V5.500" stroke="#e6e8e8" strokeWidth="1.500" />
          </svg>
          <Url><b>view.qiime2.org</b>/visualization/?type=html&amp;src=54ab9314-1569-4f7e-aa5b-e466b4e2a41d</Url>
          <PlainButton aria-label="Bookmark this tab">
            <Glyph size={17} width={1.6} d="M9 1.800L11.200 6.900L16.700 7.400L12.500 11L13.800 16.400L9 13.500L4.200 16.400L5.500 11L1.300 7.400L6.800 6.900Z" />
          </PlainButton>
        </AddressBar>
        <Avatar>M</Avatar>
        <PlainButton aria-label="Menu">
          <svg width="4" height="16" viewBox="0 0 4 16" fill="#4f5b63"><circle cx="2" cy="3" r="1.700" /><circle cx="2" cy="8" r="1.700" /><circle cx="2" cy="13" r="1.700" /></svg>
        </PlainButton>
      </Toolbar>

      <SiteHeader>
        <HeaderInner>
          <Logo />
          <FileName>File: <b>empress-tree.qzv</b></FileName>
          <SiteNav>
            <NavLink href="#visualization" $active>Visualization</NavLink>
            <NavLink href="#details">Details</NavLink>
            <NavLink href="#provenance">Provenance</NavLink>
          </SiteNav>
        </HeaderInner>
      </SiteHeader>

      <Workspace>
        <Stage>
          <Tree />
          <FloatingLegend>
            <LegendTitle $height={27} $line={29}>Level 2</LegendTitle>
            {PHYLA.map(([name, color]) => (
              <LegendRow key={name}><Swatch $color={color} />{name}</LegendRow>
            ))}
            <ResizeGrip width="8" height="8" viewBox="0 0 8 8" stroke="#666" strokeWidth="1">
              <path d="M0.500 7.500L7.500 0.500M4.500 7.500L7.500 4.500" />
            </ResizeGrip>
          </FloatingLegend>
        </Stage>

        <Panel>
          <PanelTitle>Layer 3</PanelTitle>
          <ButtonPair>
            <Button $dark>Feature Metadata</Button>
            <Button>Sample Metadata</Button>
          </ButtonPair>
          <Fields>
            <Row>
              <label htmlFor="color-by">Color by...</label>
              <Check id="color-by" checked />
              <Dropdown id="color-field" label="Color field" value="Confidence" />
            </Row>
            <Row $indent>
              <label htmlFor="color-map">Color Map</label>
              <Dropdown id="color-map" value="Viridis" />
            </Row>
            <Row $indent $inset={11}>
              <label htmlFor="continuous">Continuous values?</label>
              <Check id="continuous" />
            </Row>
            <Row>
              <label htmlFor="scale-by">Scale length by...</label>
              <Check id="scale-by" />
              <Dropdown id="scale-field" label="Length field" value="Level 1" disabled />
            </Row>
            <Row>
              <label htmlFor="default-length">Default length</label>
              <NumberInput id="default-length" type="text" inputMode="numeric" defaultValue="100" />
            </Row>
          </Fields>
          <ValueBox>
            <ValueList>
              <LegendTitle $height={29} $line={27}>Confidence</LegendTitle>
              {VALUES.map((v, i) => (
                <LegendRow key={i}><Swatch $color="#440154" />{v}</LegendRow>
              ))}
            </ValueList>
            <Track $width={16} $above={16}>
              <Arrow $muted />
              <Thumb $height={30} />
              <Arrow $down />
            </Track>
          </ValueBox>
          <Row $inset={0} $height={36}>
            <span>Remove this layer</span>
            <Button aria-label="Remove this layer">-</Button>
          </Row>
          <Divider />
          <Row $inset={0} $height={35}>
            <span>Add another layer</span>
            <Button aria-label="Add another layer">+</Button>
          </Row>
          <Fields />
          <Row $inset={11} $height={34}>
            <label htmlFor="border">Add a border around barplot layers?</label>
            <Check id="border" />
          </Row>
          <Divider />
          <Button>Update</Button>
        </Panel>
        <Track $width={15} $above={473}>
          <Arrow />
          <Thumb $height={273} />
          <Arrow $down />
        </Track>
      </Workspace>
    </Page>
  );
}
